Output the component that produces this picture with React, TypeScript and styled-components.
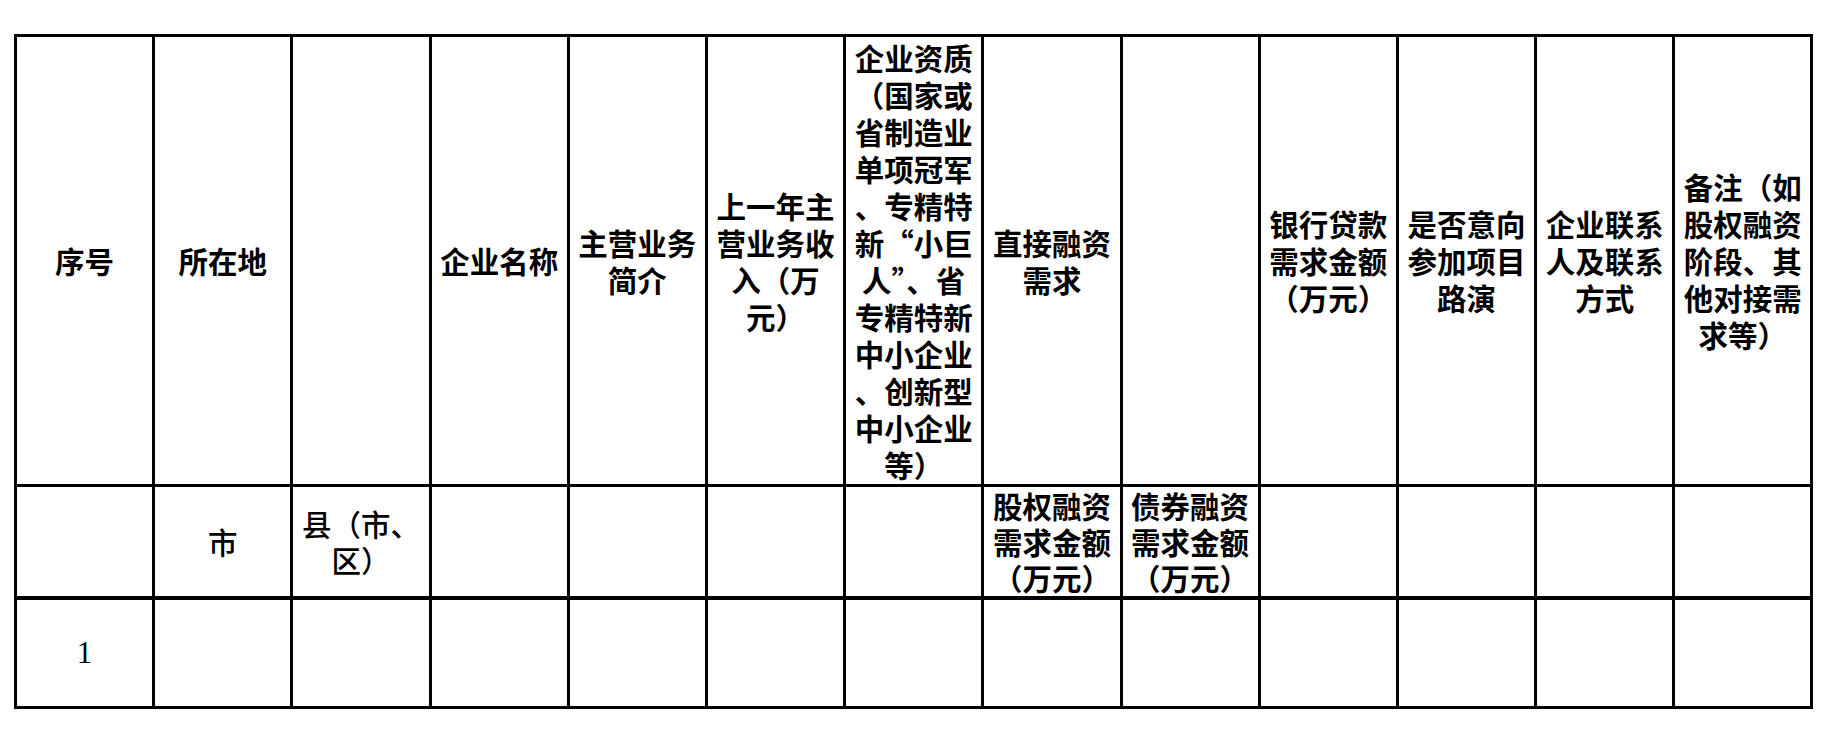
import React from "react";
import styled, { createGlobalStyle } from "styled-components";

const GlobalStyle = createGlobalStyle`
  html, body {
    margin: 0;
    padding: 0;
    background: #ffffff;
  }
  body {
    font-family: "Noto Sans CJK SC", "Noto Sans CJK TC", sans-serif;
    color: #000000;
  }
`;

const Page = styled.div`
  padding: 34px 0 0 14px;
  width: 1823px;
  height: 730px;
  box-sizing: border-box;
`;

const Sheet = styled.table`
  border-collapse: collapse;
  table-layout: fixed;
  width: 1797px;
`;

const Col = styled.col`
  width: 138.2px;
`;

const Row = styled.tr<{ $h: number }>`
  height: ${(p) => p.$h}px;
`;

const Cell = styled.td<{
  $weight?: number;
  $lh?: number;
  $serif?: boolean;
  $thickTop?: boolean;
}>`
  border: 3px solid #000000;
  ${(p) => (p.$thickTop ? "border-top-width: 4px;" : "")}
  padding: 0;
  text-align: center;
  vertical-align: middle;
  font-family: ${(p) =>
    p.$serif
      ? `"Liberation Serif", "Times New Roman", serif`
      : `"Noto Sans CJK SC", "Noto Sans CJK TC", sans-serif`};
  font-size: ${(p) => (p.$serif ? 31 : 29.5)}px;
  line-height: ${(p) => p.$lh ?? 37}px;
  font-weight: ${(p) => p.$weight ?? 700};
  overflow: hidden;
`;

const Line = styled.span`
  display: block;
  white-space: nowrap;
`;

type CellDef = { lines: string[]; weight?: number };

const headerTop: CellDef[] = [
  { lines: ["序号"] },
  { lines: ["所在地"] },
  { lines: [] },
  { lines: ["企业名称"] },
  { lines: ["主营业务", "简介"] },
  { lines: ["上一年主", "营业务收", "入（万", "元）"] },
  {
    lines: [
      "企业资质",
      "（国家或",
      "省制造业",
      "单项冠军",
      "、专精特",
      "新“小巨",
      "人”、省",
      "专精特新",
      "中小企业",
      "、创新型",
      "中小企业",
      "等）",
    ],
  },
  { lines: ["直接融资", "需求"] },
  { lines: [] },
  { lines: ["银行贷款", "需求金额", "（万元）"] },
  { lines: ["是否意向", "参加项目", "路演"] },
  { lines: ["企业联系", "人及联系", "方式"] },
  { lines: ["备注（如", "股权融资", "阶段、其", "他对接需", "求等）"] },
];

const headerSub: CellDef[] = [
  { lines: [] },
  { lines: ["市"], weight: 500 },
  { lines: ["县（市、", "区）"], weight: 500 },
  { lines: [] },
  { lines: [] },
  { lines: [] },
  { lines: [] },
  { lines: ["股权融资", "需求金额", "（万元）"] },
  { lines: ["债券融资", "需求金额", "（万元）"] },
  { lines: [] },
  { lines: [] },
  { lines: [] },
  { lines: [] },
];

const columnCount = 13;

const renderLines = (lines: string[]) =>
  lines.map((l, i) => <Line key={i}>{l}</Line>);

export default function App() {
  return (
    <>
      <GlobalStyle />
      <Page lang="zh-CN">
        <Sheet>
          <colgroup>
            {Array.from({ length: columnCount }).map((_, i) => (
              <Col key={i} />
            ))}
          </colgroup>
          <tbody>
            <Row $h={450}>
              {headerTop.map((c, i) => (
                <Cell key={i} $weight={c.weight} $lh={37}>
                  {renderLines(c.lines)}
                </Cell>
              ))}
            </Row>
            <Row $h={112}>
              {headerSub.map((c, i) => (
                <Cell key={i} $weight={c.weight} $lh={36}>
                  {renderLines(c.lines)}
                </Cell>
              ))}
            </Row>
            <Row $h={110}>
              {Array.from({ length: columnCount }).map((_, i) => (
                <Cell key={i} $thickTop $serif={i === 0} $weight={400}>
                  {i === 0 ? "1" : null}
                </Cell>
              ))}
            </Row>
          </tbody>
        </Sheet>
      </Page>
    </>
  );
}
